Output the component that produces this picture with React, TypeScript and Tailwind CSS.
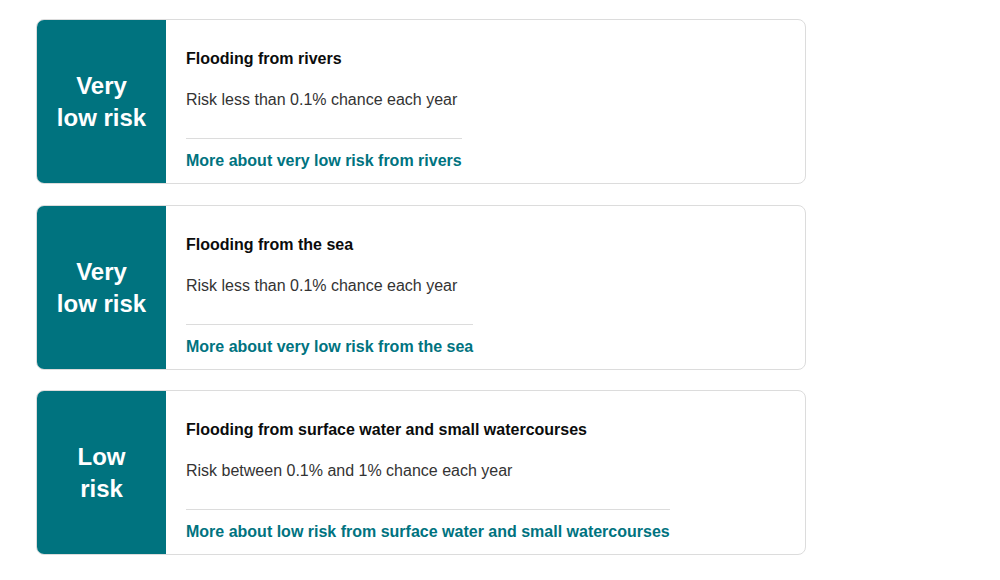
const RISKS = [
  {
    level: ['Very', 'low risk'],
    title: 'Flooding from rivers',
    text: 'Risk less than 0.1% chance each year',
    link: 'More about very low risk from rivers',
  },
  {
    level: ['Very', 'low risk'],
    title: 'Flooding from the sea',
    text: 'Risk less than 0.1% chance each year',
    link: 'More about very low risk from the sea',
  },
  {
    level: ['Low', 'risk'],
    title: 'Flooding from surface water and small watercourses',
    text: 'Risk between 0.1% and 1% chance each year',
    link: 'More about low risk from surface water and small watercourses',
  },
]

export default function App() {
  return (
    <div className="min-h-screen bg-white pl-[36px] pt-[19px] font-['Liberation_Sans',Arial,sans-serif]">
      <div className="flex w-[770px] flex-col gap-[20.5px]">
        {RISKS.map((r) => (
          <div
            key={r.title}
            className="flex overflow-hidden rounded-[8px] border border-[#dcdcdc] bg-white"
          >
            {/* risk level panel */}
            <div className="flex w-[129px] shrink-0 flex-col items-center justify-center pt-[1px] bg-[#00737f] text-[24px] font-bold leading-[32px] text-white">
              {r.level.map((l) => (
                <span key={l}>{l}</span>
              ))}
            </div>

            <div className="px-[20px] pb-[12px] pt-[29px]">
              <div className="w-fit">
                <h2 className="text-[16px] font-bold leading-[20px] text-[#0b0c0c]">{r.title}</h2>
                <p className="mt-[21px] text-[16px] leading-[20px] text-[#333]">{r.text}</p>
                <div className="mt-[28px] h-px bg-[#dcdcdc]" />
                <a
                  href="#"
                  className="mt-[12px] block text-[16px] font-bold leading-[20px] text-[#00737f]"
                >
                  {r.link}
                </a>
              </div>
            </div>
          </div>
        ))}
      </div>
    </div>
  )
}
